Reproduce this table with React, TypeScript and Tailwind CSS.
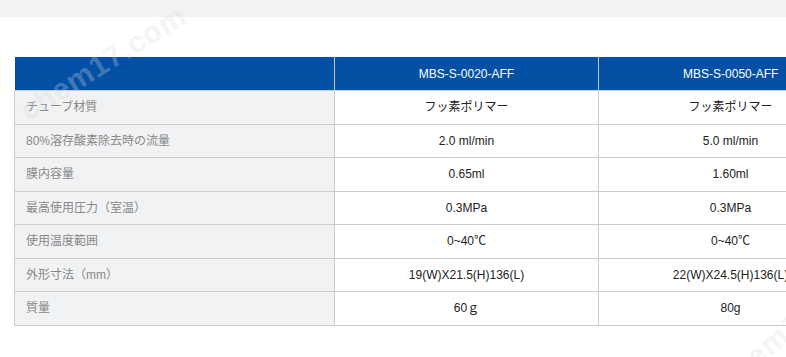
import React from 'react'

const rows: [string, string, string][] = [
    ['チューブ材質', 'フッ素ポリマー', 'フッ素ポリマー'],
    ['80%溶存酸素除去時の流量', '2.0 ml/min', '5.0 ml/min'],
    ['膜内容量', '0.65ml', '1.60ml'],
    ['最高使用圧力（室温）', '0.3MPa', '0.3MPa'],
    ['使用温度範囲', '0~40℃', '0~40℃'],
    ['外形寸法（mm）', '19(W)X21.5(H)136(L)', '22(W)X24.5(H)136(L)'],
    ['質量', '60ｇ', '80g'],
]

export default function App() {
    return (
        <div
            className="relative w-[786px] h-[357px] overflow-hidden bg-white"
            style={{ fontFamily: '"Liberation Sans", "Noto Sans CJK JP", sans-serif' }}
        >
            <div className="h-[17px] bg-[#f1f2f4]" />
            <div className="pl-[14px] pt-[40px]">
                <table className="border-collapse table-fixed w-[848px] text-[12px]">
                    <colgroup>
                        <col className="w-[320px]" />
                        <col className="w-[264px]" />
                        <col className="w-[264px]" />
                    </colgroup>
                    <thead>
                        <tr className="h-[33.5px] bg-[#0450a5] text-white">
                            <th className="border-r border-[#c8c8c8] font-normal" />
                            <th className="border-r border-[#c8c8c8] font-normal text-center">MBS-S-0020-AFF</th>
                            <th className="font-normal text-center">MBS-S-0050-AFF</th>
                        </tr>
                    </thead>
                    <tbody>
                        {rows.map(([label, a, b]) => (
                            <tr key={label} className="h-[33.5px]">
                                <td className="border border-[#cccccc] bg-[#f1f2f4] pl-[11px] text-[#888888]">{label}</td>
                                <td className="border border-[#cccccc] text-center text-[#222222]">{a}</td>
                                <td className="border border-[#cccccc] text-center text-[#222222]">{b}</td>
                            </tr>
                        ))}
                    </tbody>
                </table>
            </div>
            <div className="pointer-events-none absolute left-[8px] top-[40px] -rotate-[32deg] text-[30px] font-bold text-[#d8d8d8]/30 tracking-wide">
                chem17.com
            </div>
            <div className="pointer-events-none absolute left-[700px] top-[300px] -rotate-[40deg] text-[30px] font-bold text-[#d8d8d8]/30 tracking-wide">
                chem17.com
            </div>
        </div>
    )
}
